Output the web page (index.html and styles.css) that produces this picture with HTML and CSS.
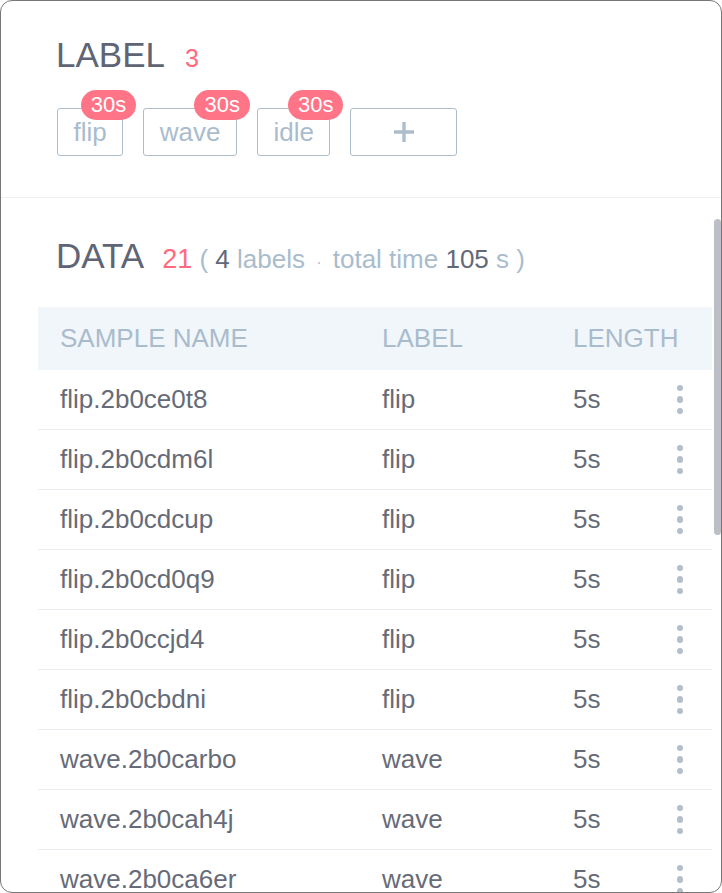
FILE: index.html
```html
<!DOCTYPE html>
<html>
<head>
<meta charset="utf-8">
<link rel="stylesheet" href="styles.css">
</head>
<body>
<div class="frame">
  <section class="label-section">
    <div class="section-title">
      <span class="title">LABEL</span>
      <span class="count">3</span>
    </div>
    <div class="tags">
      <div class="tag">flip<span class="badge">30s</span></div>
      <div class="tag">wave<span class="badge">30s</span></div>
      <div class="tag">idle<span class="badge">30s</span></div>
      <div class="tag add">
        <svg width="22" height="22" viewBox="0 0 22 22"><path d="M11 1V21M1 11H21" stroke="#aebdcb" stroke-width="3.4" fill="none"/></svg>
      </div>
    </div>
  </section>
  <section class="data-section">
    <div class="section-title">
      <span class="title">DATA</span>
      <span class="meta"><span class="red">21</span> ( <span class="dark">4</span> labels <span class="sep">·</span> total time <span class="dark">105</span> s )</span>
    </div>
    <div class="table">
      <div class="thead">
        <span>SAMPLE NAME</span><span>LABEL</span><span>LENGTH</span><span></span>
      </div>
      <div class="row"><span>flip.2b0ce0t8</span><span>flip</span><span>5s</span><span class="dots"><i></i><i></i><i></i></span></div>
      <div class="row"><span>flip.2b0cdm6l</span><span>flip</span><span>5s</span><span class="dots"><i></i><i></i><i></i></span></div>
      <div class="row"><span>flip.2b0cdcup</span><span>flip</span><span>5s</span><span class="dots"><i></i><i></i><i></i></span></div>
      <div class="row"><span>flip.2b0cd0q9</span><span>flip</span><span>5s</span><span class="dots"><i></i><i></i><i></i></span></div>
      <div class="row"><span>flip.2b0ccjd4</span><span>flip</span><span>5s</span><span class="dots"><i></i><i></i><i></i></span></div>
      <div class="row"><span>flip.2b0cbdni</span><span>flip</span><span>5s</span><span class="dots"><i></i><i></i><i></i></span></div>
      <div class="row"><span>wave.2b0carbo</span><span>wave</span><span>5s</span><span class="dots"><i></i><i></i><i></i></span></div>
      <div class="row"><span>wave.2b0cah4j</span><span>wave</span><span>5s</span><span class="dots"><i></i><i></i><i></i></span></div>
      <div class="row"><span>wave.2b0ca6er</span><span>wave</span><span>5s</span><span class="dots"><i></i><i></i><i></i></span></div>
      <div class="row"><span>wave.2b0c9x1k</span><span>wave</span><span>5s</span><span class="dots"><i></i><i></i><i></i></span></div>
    </div>
  </section>
  <div class="scroll-thumb"></div>
</div>
</body>
</html>
```

FILE: styles.css
```css
html, body {
  margin: 0;
  padding: 0;
  background: #fff;
}
body {
  font-family: "Liberation Sans", Arial, sans-serif;
}
.frame {
  width: 722px;
  height: 893px;
  box-sizing: border-box;
  border: 1px solid #777;
  border-radius: 12px;
  overflow: hidden;
  position: relative;
  display: flex;
  flex-direction: column;
}
.label-section {
  flex: none;
  height: 197px;
  box-sizing: border-box;
  border-bottom: 1px solid #eef0f3;
  padding: 34px 0 0 56px;
}
.section-title {
  display: flex;
  align-items: baseline;
  margin-left: -1px;
}
.title {
  font-size: 35px;
  line-height: 40px;
  color: #5f6574;
}
.count {
  font-size: 25px;
  color: #ff6b7d;
  margin-left: 20px;
}
.tags {
  display: flex;
  gap: 20px;
  margin-top: 33px;
}
.tag {
  position: relative;
  height: 48px;
  box-sizing: border-box;
  border: 1px solid #aebdcb;
  border-radius: 3px;
  padding: 0 15.5px;
  font-size: 26px;
  line-height: 46px;
  color: #a9bccd;
}
.tag.add {
  width: 107px;
  padding: 0;
  display: flex;
  justify-content: center;
  align-items: center;
}
.badge {
  position: absolute;
  top: -19px;
  right: -14px;
  height: 30px;
  padding: 0 10px;
  border-radius: 15px;
  background: #ff7486;
  color: #fff;
  font-size: 22px;
  line-height: 30px;
}
.data-section {
  flex: 1;
  min-height: 0;
  padding: 38px 9px 0 37px;
}
.data-section .section-title {
  margin-left: 18px;
}
.meta {
  font-size: 26px;
  color: #a9bccd;
  margin-left: 18px;
}
.meta .red {
  color: #ff6b7d;
  font-size: 27px;
}
.meta .dark {
  color: #626878;
}
.meta .sep {
  font-size: 16px;
  margin: 0 4px;
}
.table {
  margin-top: 31px;
}
.thead, .row {
  display: grid;
  grid-template-columns: 322px 191px 1fr 64px;
  align-items: center;
  padding-left: 22px;
  font-size: 26px;
}
.thead {
  height: 63px;
  background: #f1f6fa;
  color: #a9bccd;
}
.row {
  height: 60px;
  box-sizing: border-box;
  border-bottom: 1px solid #e9edf2;
  color: #666b78;
}
.dots {
  display: flex;
  flex-direction: column;
  align-items: center;
  gap: 5px;
}
.dots i {
  width: 6.5px;
  height: 6.5px;
  border-radius: 50%;
  background: #b3bfcb;
}
.scroll-thumb {
  position: absolute;
  top: 218px;
  right: 0;
  width: 7px;
  height: 316px;
  border-radius: 4px;
  background: #bcc0c6;
}
```
